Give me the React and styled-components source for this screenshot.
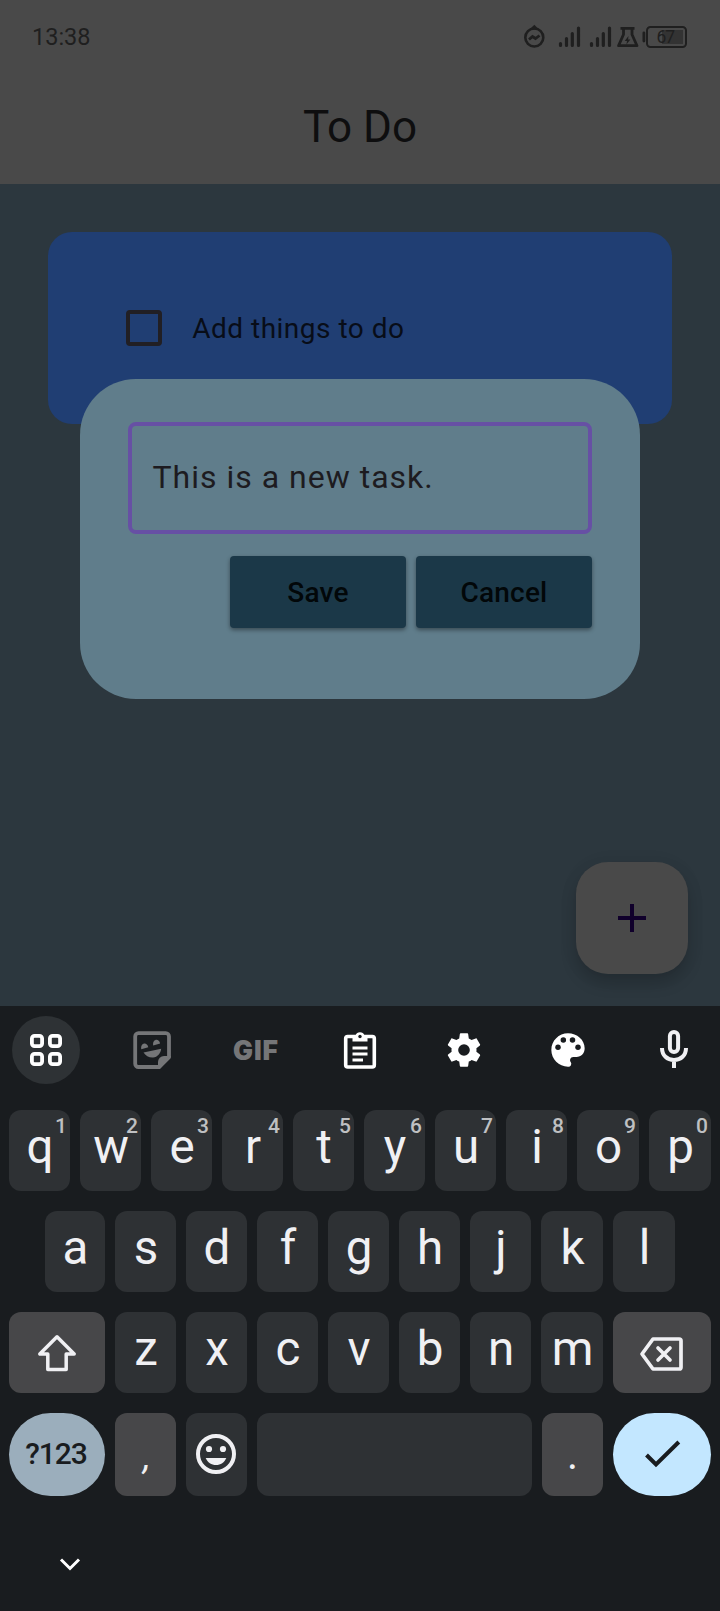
import React from 'react';
import styled, { createGlobalStyle } from 'styled-components';

const Global = createGlobalStyle`
  * { box-sizing: border-box; }
  body { margin: 0; background: #191c1f; font-family: Roboto, "Liberation Sans", sans-serif; }
  svg { display: block; flex: none; }
`;

const Phone = styled.div`
  width: 720px;
  height: 1611px;
  display: flex;
  flex-direction: column;
  overflow: hidden;
`;

const Screen = styled.main`
  position: relative;
  height: 1006px;
  flex: none;
  overflow: hidden;
  background: #2c373e;
`;

const Header = styled.header`
  height: 184px;
  background: #494949;
`;

const StatusBar = styled.div`
  height: 74px;
  padding: 0 32px 1px;
  display: flex;
  align-items: center;
  justify-content: space-between;
  font-size: 23.5px;
  color: #1f1f1f;
`;

const Title = styled.h1`
  margin: 0;
  height: 106px;
  line-height: 106px;
  text-align: center;
  font-size: 44px;
  font-weight: 400;
  color: #0e0e0f;
`;

const TaskCard = styled.section`
  margin: 48px 48px 0;
  height: 192px;
  padding-left: 78px;
  display: flex;
  align-items: center;
  gap: 30.2px;
  border-radius: 24px;
  background: #203e73;
  color: #080d18;
  font-size: 28px;
  letter-spacing: 0.5px;
`;

const Checkbox = styled.span`
  width: 36px;
  height: 36px;
  border: 4px solid #211f24;
  border-radius: 4px;
`;

const Dialog = styled.div`
  position: absolute;
  top: 379px;
  left: 80px;
  width: 560px;
  height: 320px;
  padding: 43px 48px 0;
  border-radius: 56px;
  background: #607d8b;
`;

const Field = styled.div`
  height: 112px;
  padding: 0 20.5px 2px;
  display: flex;
  align-items: center;
  border: 4px solid #6750a4;
  border-radius: 8px;
  font-size: 32px;
  letter-spacing: 1px;
  color: #1d1b20;
`;

const Actions = styled.div`
  margin-top: 22.4px;
  display: flex;
  justify-content: flex-end;
  gap: 10px;
`;

const ActionButton = styled.button`
  width: 176px;
  height: 72px;
  padding: 0;
  border: 0;
  border-radius: 4px;
  background: #1b3848;
  box-shadow: 0 2px 4px rgba(0, 0, 0, 0.4);
  color: #020709;
  font: 500 28px Roboto, sans-serif;
  letter-spacing: 0.2px;
`;

const Fab = styled.button`
  position: absolute;
  right: 32px;
  bottom: 32px;
  width: 112px;
  height: 112px;
  padding: 0;
  display: grid;
  place-items: center;
  border: 0;
  border-radius: 32px;
  background: #494949;
  box-shadow: 0 9px 16px rgba(0, 0, 0, 0.18), 0 2px 20px rgba(0, 0, 0, 0.05);
`;

const Keyboard = styled.section`
  flex: 1;
  background: #191c1f;
  color: #f0f0f3;
`;

const Toolbar = styled.div`
  height: 104px;
  padding: 10px 0 0 12px;
  display: flex;
  align-items: flex-start;
`;

const AppsButton = styled.div`
  width: 68px;
  height: 68px;
  margin-right: 20px;
  display: grid;
  place-items: center;
  border-radius: 50%;
  background: #2e3235;
`;

const Tool = styled.div`
  width: ${(p) => (p.$last ? 100 : 104)}px;
  padding-left: ${(p) => (p.$last ? 8 : 0)}px;
  height: 68px;
  display: grid;
  place-items: center;
`;

const GifLabel = styled.span`
  font: 900 26.5px Inter, sans-serif;
  letter-spacing: 0.9px;
  color: #757678;
`;

const Rows = styled.div`
  display: flex;
  flex-direction: column;
  gap: 20px;
`;

const Row = styled.div`
  height: ${(p) => (p.$tall ? 83 : 81)}px;
  padding: 0 ${(p) => (p.$inset ? 45 : 9)}px;
  display: grid;
  grid-template-columns: ${(p) => p.$columns};
  column-gap: 10px;
`;

const tones = { letter: '#2e3134', control: '#474749', mode: '#9baebc', enter: '#c3e7ff' };

const Key = styled.div`
  position: relative;
  padding: ${(p) => (p.$centered ? '0' : '0 0 6px 1px')};
  display: flex;
  align-items: center;
  justify-content: center;
  border-radius: ${(p) => (p.$pill ? 42 : 12)}px;
  background: ${(p) => tones[p.$tone || 'letter']};
  font-size: 47.5px;
  line-height: 1;
`;

const Hint = styled.span`
  position: absolute;
  top: 5px;
  right: 3px;
  font-size: 21px;
  font-weight: 500;
  line-height: 22px;
  color: #bfc0c2;
`;

const ModeLabel = styled.span`
  padding: 0 2px 2px 0;
  font-size: 30px;
  font-weight: 500;
  letter-spacing: -1.1px;
  color: #191c1f;
`;

const Mark = styled.span`
  font-size: ${(p) => (p.$slanted ? 36 : 42)}px;
  padding-top: ${(p) => (p.$slanted ? 5 : 1)}px;
  padding-left: ${(p) => (p.$slanted ? 3 : 0)}px;
  font-style: ${(p) => (p.$slanted ? 'italic' : 'normal')};
`;

const NavBar = styled.div`
  padding: 59px 0 0 58px;
`;

const StatusIcons = () => (
  <svg width="170" height="30" viewBox="518 21 170 30" fill="none" stroke="#1f1f1f">
    <circle cx="534.3" cy="36.5" r="9" strokeWidth="2.6" />
    <path d="M529.5 28.5 534.3 23.8 539 28.5Z" fill="#1f1f1f" stroke="none" />
    <path d="M529 38.5 532.5 35.5 535.5 37.5 539.5 34.5" strokeWidth="2.8" />
    <path
      d="M560.5 42.5v2M566.5 37.5v7M572.3 32.5v12M578.5 27v17.5M591.5 42.5v2M597.5 37.5v7M603.3 32.5v12M609.5 27v17.5"
      strokeWidth="3.2"
      strokeLinecap="round"
    />
    <path d="M620.5 27.3h14M623.5 28v5.5l-5 11.2h18.5l-5-11.2V28" strokeWidth="2.8" strokeLinejoin="round" />
    <path d="M628.5 35l-3.800 5h2.300l-.6 3.500 4-5h-2.300z" fill="#1f1f1f" stroke="none" />
    <path d="M643.9 32v8" strokeWidth="2.8" strokeLinecap="round" />
    <rect x="647" y="26" width="39" height="20" rx="3.5" strokeWidth="2" />
    <rect x="662" y="29" width="21" height="14" fill="#333" stroke="none" />
    <text x="656.5" y="42.2" fontSize="17.5" fontFamily="Roboto" letterSpacing="-1" fill="#1f1f1f" stroke="none">67</text>
  </svg>
);

const AppsIcon = () => (
  <svg width="34" height="34" viewBox="0 0 34 34" fill="none" stroke="#fff" strokeWidth="3.8">
    <rect x="2.9" y="2.9" width="10.2" height="10.2" rx="2.7" />
    <rect x="20.9" y="2.9" width="10.2" height="10.2" rx="2.7" />
    <rect x="2.9" y="20.9" width="10.2" height="10.2" rx="2.7" />
    <rect x="20.9" y="20.9" width="10.2" height="10.2" rx="2.7" />
  </svg>
);

const StickerIcon = () => (
  <svg width="40" height="40" viewBox="0 0 40 40" fill="#757678">
    <path d="M27 37H6.500a3.300 3.300 0 0 1-3.300-3.300V6.500a3.300 3.300 0 0 1 3.300-3.300h27.200A3.300 3.300 0 0 1 37 6.500V27" fill="none" stroke="#757678" strokeWidth="3.8" />
    <path d="M26 38.9V32a6 6 0 0 1 6-6h6.900v2L28 38.900Z" />
    <path d="M9.300 19.300C8.200 12.800 15 11.400 16.300 17.300ZM21.200 15.600C20.100 9.100 27 7.700 28.100 13.600Z" />
    <path d="M11.5 22.5 29.2 18.800C28.600 23.500 25.500 27.200 21 27.500c-4 .2-7.400-1.700-9.500-5Z" />
  </svg>
);

const ClipboardIcon = () => (
  <svg width="40" height="40" viewBox="0 0 40 40" fill="none" stroke="#fff">
    <rect x="5.7" y="6.5" width="28.6" height="30.5" rx="2" strokeWidth="3.6" />
    <path d="M12.5 5.500h3a4.800 4.800 0 0 1 9 0h3v6h-15z" fill="#fff" stroke="none" />
    <circle cx="20" cy="6.5" r="1.7" fill="#191c1f" stroke="none" />
    <path d="M12.5 18h15M12.5 24h15M12.5 30h10.5" strokeWidth="3.2" />
  </svg>
);

const GearIcon = () => (
  <svg width="40" height="40" viewBox="0 0 24 24" fill="#fff">
    <path
      fillRule="evenodd"
      d="M19.430 12.980c.04-.32.07-.64.07-.98s-.03-.66-.07-.98l2.110-1.650c.19-.15.24-.42.12-.64l-2-3.460c-.12-.22-.39-.3-.61-.22l-2.490 1c-.52-.4-1.080-.73-1.690-.98l-.38-2.650A.488.488 0 0 0 14 2h-4c-.25 0-.46.18-.49.420l-.38 2.650c-.61.25-1.170.59-1.690.98l-2.490-1c-.23-.09-.49 0-.61.220l-2 3.460c-.13.22-.07.490.12.640l2.110 1.650c-.04.320-.07.650-.07.980s.03.660.07.980l-2.110 1.650c-.19.150-.24.420-.12.640l2 3.460c.12.220.39.300.61.220l2.490-1c.52.400 1.080.730 1.690.980l.38 2.650c.03.240.24.420.49.420h4c.25 0 .46-.180.49-.420l.38-2.650c.61-.250 1.170-.590 1.690-.980l2.490 1c.23.090.49 0 .61-.220l2-3.460c.12-.220.07-.490-.12-.640l-2.110-1.650zM12 15.500a3.500 3.500 0 1 1 0-7 3.500 3.500 0 0 1 0 7z"
    />
  </svg>
);

const PaletteIcon = () => (
  <svg width="40" height="40" viewBox="0 0 24 24" fill="#fff">
    <path d="M12 2C6.490 2 2 6.490 2 12s4.490 10 10 10a1.700 1.700 0 0 0 1.700-2.600c-.9-1.200-.4-3.200 1.500-3.200H17c3 0 5-2.200 5-5.200C22 6 17.510 2 12 2z" />
    <g fill="#191c1f">
      <circle cx="6" cy="10.4" r="1.65" />
      <circle cx="9.2" cy="6" r="1.65" />
      <circle cx="14.7" cy="6" r="1.65" />
      <circle cx="18" cy="10.4" r="1.65" />
    </g>
  </svg>
);

const MicIcon = () => (
  <svg width="40" height="40" viewBox="0 0 40 40" fill="none" stroke="#f0f0f3" strokeWidth="4">
    <rect x="15.9" y="2" width="8.2" height="20" rx="4.1" />
    <path d="M8 18c0 7.500 5.200 12 12 12s12-4.500 12-12M20 30v8" />
  </svg>
);

const ShiftIcon = () => (
  <svg width="40" height="40" viewBox="0 0 40 40" fill="none" stroke="#f0f0f3" strokeWidth="3.5" strokeLinejoin="round">
    <path d="M20 3.800 2.800 21h8v15.500h18.400V21h8Z" />
  </svg>
);

const BackspaceIcon = () => (
  <svg width="48" height="40" viewBox="0 0 48 40" fill="none" stroke="#f0f0f3" strokeWidth="3.7">
    <path d="M15 6h26.200a1.800 1.800 0 0 1 1.800 1.800v26.400a1.800 1.800 0 0 1-1.800 1.800H15L4 21Z" strokeLinejoin="round" />
    <path d="M20 15 32 27M32 15 20 27" strokeLinecap="round" />
  </svg>
);

const SmileIcon = () => (
  <svg width="41" height="41" viewBox="0 0 41 41" fill="#f0f0f3">
    <circle cx="20" cy="20" r="18" fill="none" stroke="#f0f0f3" strokeWidth="4" />
    <circle cx="13" cy="15" r="3.1" />
    <circle cx="27" cy="15" r="3.1" />
    <path d="M9.7 24h20.600c-1.800 4.600-5.700 7-10.300 7s-8.500-2.400-10.300-7Z" />
  </svg>
);

const CheckIcon = () => (
  <svg width="40" height="41" viewBox="0 0 40 41" fill="none" stroke="#191c1f" strokeWidth="4">
    <path d="M4.500 21 14 30.500 36.800 8" />
  </svg>
);

const Letters = ({ keys, hints }) =>
  keys.split('').map((letter, i) => (
    <Key key={letter}>
      {letter}
      {hints && <Hint>{hints[i]}</Hint>}
    </Key>
  ));

export default function App() {
  return (
    <>
      <Global />
      <Phone>
        <Screen>
          <Header>
            <StatusBar>
              <span>13:38</span>
              <StatusIcons />
            </StatusBar>
            <Title>To Do</Title>
          </Header>
          <TaskCard>
            <Checkbox />
            <span>Add things to do</span>
          </TaskCard>
          <Dialog>
            <Field>This is a new task.</Field>
            <Actions>
              <ActionButton>Save</ActionButton>
              <ActionButton>Cancel</ActionButton>
            </Actions>
          </Dialog>
          <Fab>
            <svg width="28" height="28" viewBox="0 0 28 28" stroke="#10002b" strokeWidth="4">
              <path d="M14 0v28M0 14h28" />
            </svg>
          </Fab>
        </Screen>
        <Keyboard>
          <Toolbar>
            <AppsButton><AppsIcon /></AppsButton>
            <Tool><StickerIcon /></Tool>
            <Tool><GifLabel>GIF</GifLabel></Tool>
            <Tool><ClipboardIcon /></Tool>
            <Tool><GearIcon /></Tool>
            <Tool><PaletteIcon /></Tool>
            <Tool $last><MicIcon /></Tool>
          </Toolbar>
          <Rows>
            <Row $columns="repeat(8, 61px) 62px 62px">
              <Letters keys="qwertyuiop" hints="1234567890" />
            </Row>
            <Row $inset $columns="60px repeat(6, 61px) 62px 62px">
              <Letters keys="asdfghjkl" />
            </Row>
            <Row $columns="96px repeat(6, 61px) 62px 98px">
              <Key $tone="control" $centered><ShiftIcon /></Key>
              <Letters keys="zxcvbnm" />
              <Key $tone="control" $centered><BackspaceIcon /></Key>
            </Row>
            <Row $tall $columns="96px 61px 61px 275px 61px 98px">
              <Key $tone="mode" $pill $centered><ModeLabel>?123</ModeLabel></Key>
              <Key $tone="control" $centered><Mark $slanted>,</Mark></Key>
              <Key $centered><SmileIcon /></Key>
              <Key $centered />
              <Key $tone="control" $centered><Mark>.</Mark></Key>
              <Key $tone="enter" $pill $centered><CheckIcon /></Key>
            </Row>
          </Rows>
          <NavBar>
            <svg width="24" height="16" viewBox="0 0 24 16" fill="none" stroke="#fff" strokeWidth="3">
              <path d="M3 4.500 12 13.500 21 4.500" />
            </svg>
          </NavBar>
        </Keyboard>
      </Phone>
    </>
  );
}
